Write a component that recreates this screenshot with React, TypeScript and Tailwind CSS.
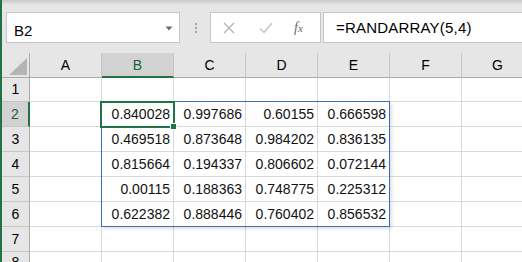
import React from "react";

const cols = ["A", "B", "C", "D", "E", "F", "G"];
const data: Record<number, string[]> = {
  2: ["0.840028", "0.997686", "0.60155", "0.666598"],
  3: ["0.469518", "0.873648", "0.984202", "0.836135"],
  4: ["0.815664", "0.194337", "0.806602", "0.072144"],
  5: ["0.00115", "0.188363", "0.748775", "0.225312"],
  6: ["0.622382", "0.888446", "0.760402", "0.856532"],
};
const rows = [1, 2, 3, 4, 5, 6, 7, 8];

export default function App() {
  return (
    <div
      className="flex w-[522px] h-[262px] overflow-hidden bg-white text-black"
      style={{ fontFamily: '"Liberation Sans", Arial, sans-serif' }}
    >
      <div className="w-[2px] shrink-0 bg-[#217346]" />
      <div className="flex flex-col flex-1 min-w-0">
        {/* Formula bar */}
        <div className="h-[53px] shrink-0 flex items-start pt-[12px] pl-[4px] bg-[linear-gradient(to_bottom,#c9c9c9,#e6e6e6_5px)]">
          <div className="w-[174px] h-[31px] shrink-0 bg-white border border-[#c6c6c6] flex items-center justify-between pl-[7px] pr-[6px]">
            <span className="text-[15px] pt-[5px] leading-none">B2</span>
            <svg width="8" height="5" viewBox="0 0 8 5" className="mt-[1px]">
              <path d="M0.5 0.5 L7.5 0.5 L4 4.5 Z" fill="#6b6b6b" />
            </svg>
          </div>
          <div className="w-[30px] h-[31px] shrink-0 flex flex-col items-center justify-center gap-[2px] pl-[1px]">
            <div className="w-[2px] h-[2px] bg-[#a3a3a3]" />
            <div className="w-[2px] h-[2px] bg-[#a3a3a3]" />
            <div className="w-[2px] h-[2px] bg-[#a3a3a3]" />
          </div>
          <div className="w-[111px] h-[31px] shrink-0 bg-white border border-[#c6c6c6] flex items-center">
            <svg width="12" height="12" viewBox="0 0 12 12" className="ml-[12px]">
              <path d="M1 1 L11 11 M11 1 L1 11" stroke="#b5b5b5" strokeWidth="1.4" />
            </svg>
            <svg width="14" height="12" viewBox="0 0 14 12" className="ml-[24px]">
              <path d="M1 6.5 L5 10.5 L13 1" stroke="#c4c4c4" strokeWidth="1.4" fill="none" />
            </svg>
            <span
              className="ml-[21px] text-[14px] italic text-[#6a6a6a] leading-none"
              style={{ fontFamily: '"Liberation Serif", "Times New Roman", serif' }}
            >
              f<span className="text-[11px]">x</span>
            </span>
          </div>
          <div className="ml-[2px] flex-1 h-[31px] bg-white border border-r-0 border-[#c6c6c6] flex items-center pl-[12px]">
            <span className="text-[15px] leading-none tracking-[0.2px]">=RANDARRAY(5,4)</span>
          </div>
        </div>

        {/* Grid */}
        <div className="relative flex-1">
          <div className="grid grid-cols-[28px_repeat(7,72px)] grid-rows-[25px_24px_repeat(6,25px)]">
            {/* Corner */}
            <div className="bg-[#e6e6e6] border-r border-b border-[#ababab] relative">
              <svg width="18" height="17" viewBox="0 0 18 17" className="absolute right-[2px] bottom-[2px]">
                <path d="M18 0 L18 17 L0 17 Z" fill="#b5b5b5" />
              </svg>
            </div>
            {cols.map((c) =>
              c === "B" ? (
                <div
                  key={c}
                  className="bg-[#d2d2d2] border-r border-[#c6c6c6] border-b-2 border-b-[#217346] flex items-center justify-center text-[14px] text-[#1e5f3a] pt-[1px]"
                >
                  {c}
                </div>
              ) : (
                <div
                  key={c}
                  className="bg-[#e6e6e6] border-r border-b border-r-[#c6c6c6] border-b-[#ababab] flex items-center justify-center text-[14px] pt-[1px]"
                >
                  {c}
                </div>
              )
            )}
            {rows.map((r) => (
              <React.Fragment key={r}>
                {r === 2 ? (
                  <div className="bg-[#d2d2d2] border-r-2 border-r-[#217346] border-b border-b-[#c6c6c6] flex items-center justify-center text-[14px] text-[#1e5f3a]">
                    {r}
                  </div>
                ) : (
                  <div className="bg-[#e6e6e6] border-r border-b border-r-[#ababab] border-b-[#c6c6c6] flex items-center justify-center text-[14px]">
                    {r}
                  </div>
                )}
                {cols.map((c, ci) => {
                  const v = data[r] && ci >= 1 && ci <= 4 ? data[r][ci - 1] : "";
                  return (
                    <div
                      key={c}
                      className="border-r border-b border-[#d9d9d9] flex items-center justify-end pr-[3px] text-[14px] text-[#111]"
                    >
                      {v}
                    </div>
                  );
                })}
              </React.Fragment>
            ))}
          </div>
          {/* Spill range border */}
          <div className="absolute left-[99px] top-[48px] w-[289px] h-[126px] border border-[#3b6cc4] shadow-[2px_2px_3px_rgba(0,0,0,0.12)] pointer-events-none" />
          {/* Active cell */}
          <div className="absolute left-[98px] top-[48px] w-[75px] h-[27px] border-2 border-[#217346] pointer-events-none" />
          <div className="absolute left-[168px] top-[70px] w-[7px] h-[7px] bg-[#217346] border border-white pointer-events-none" />
        </div>
      </div>
    </div>
  );
}
